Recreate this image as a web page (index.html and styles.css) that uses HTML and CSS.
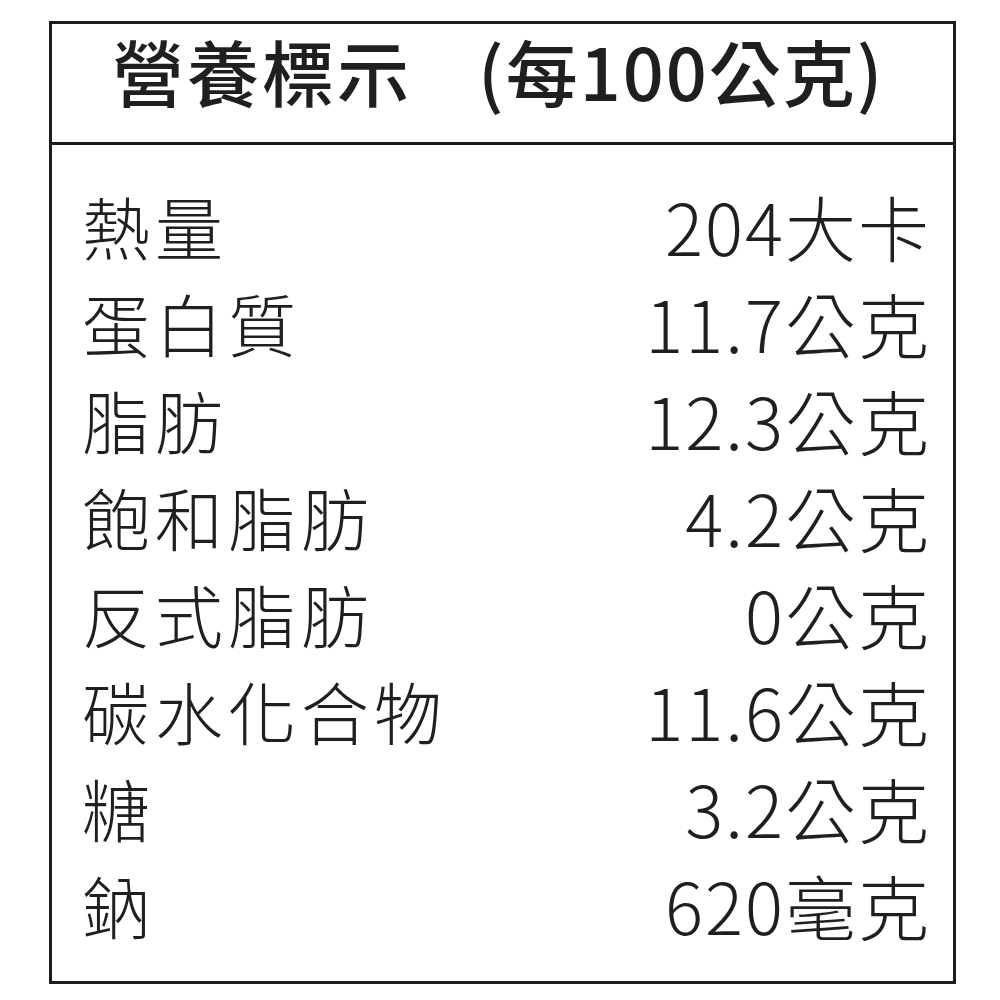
FILE: index.html
```html
<!DOCTYPE html>
<html lang="zh-Hant">
<head>
<meta charset="utf-8">
<link rel="stylesheet" href="styles.css">
</head>
<body>
<div class="label">
  <div class="head">
    <span class="head-title">營養標示</span>
    <span class="head-unit">(每100公克)</span>
  </div>
  <div class="rows">
    <div class="row"><span class="name">熱量</span><span class="val">204大卡</span></div>
    <div class="row"><span class="name">蛋白質</span><span class="val">11.7公克</span></div>
    <div class="row"><span class="name">脂肪</span><span class="val">12.3公克</span></div>
    <div class="row"><span class="name">飽和脂肪</span><span class="val">4.2公克</span></div>
    <div class="row"><span class="name">反式脂肪</span><span class="val">0公克</span></div>
    <div class="row"><span class="name">碳水化合物</span><span class="val">11.6公克</span></div>
    <div class="row"><span class="name">糖</span><span class="val">3.2公克</span></div>
    <div class="row"><span class="name">鈉</span><span class="val">620毫克</span></div>
  </div>
</div>
</body>
</html>
```
FILE: styles.css
```css
html, body {
  margin: 0;
  padding: 0;
  background: #ffffff;
}
body {
  font-family: "Noto Sans CJK TC", "Noto Sans", sans-serif;
  color: #1f1f1f;
}
.label {
  box-sizing: border-box;
  width: 907px;
  height: 963px;
  margin: 21px 0 0 49px;
  border: 3px solid #1c1c1c;
  display: flex;
  flex-direction: column;
}
.head {
  box-sizing: border-box;
  height: 121px;
  border-bottom: 3px solid #1c1c1c;
  display: flex;
  align-items: center;
  padding: 0 0 26px 60px;
  font-size: 72px;
  font-weight: 500;
  line-height: 1;
}
.head-title {
  letter-spacing: 3px;
}
.head-unit {
  margin-left: 66px;
  letter-spacing: 2px;
}
.rows {
  display: flex;
  flex-direction: column;
  padding: 32px 24px 0 30px;
}
.row {
  display: flex;
  justify-content: space-between;
  align-items: center;
  height: 97px;
  font-size: 68px;
  font-weight: 300;
  line-height: 1;
}
.name {
  letter-spacing: 5px;
}
.val {
  font-size: 71px;
  letter-spacing: 2px;
  margin-right: -2px;
}
```
